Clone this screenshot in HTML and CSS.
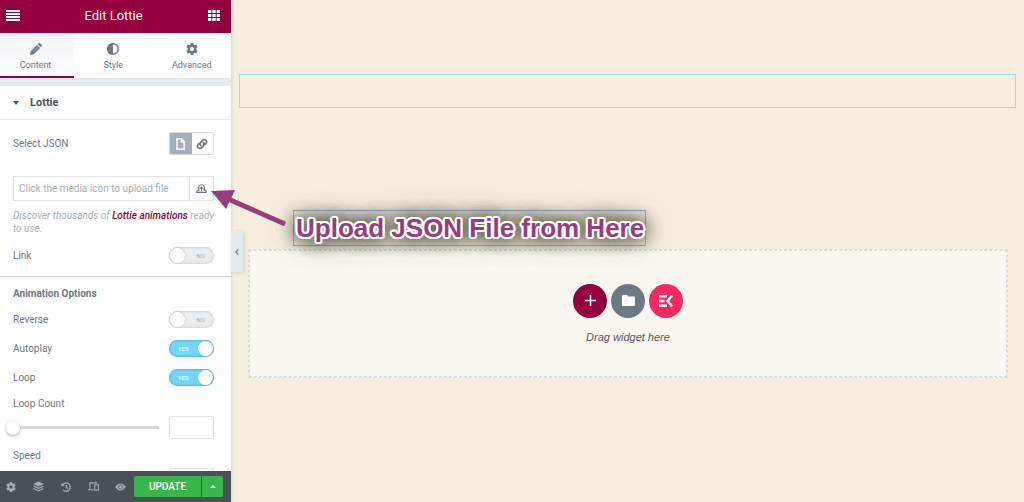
FILE: index.html
```html
<!DOCTYPE html>
<html lang="en">
<head>
    <meta charset="UTF-8">
    <meta name="viewport" content="width=device-width, initial-scale=1.0">
    <title>Edit Lottie</title>
    <link rel="stylesheet" href="styles.css">
</head>
<body>
    <aside class="panel">
        <header class="panel-header">
            <button class="header-btn" aria-label="Menu">
                <svg width="14" height="11" viewBox="0 0 14 11" fill="currentColor"><path d="M0 0h14v2H0zM0 3h14v2H0zM0 6h14v2H0zM0 9h14v2H0z"/></svg>
            </button>
            <h1>Edit Lottie</h1>
            <button class="header-btn" aria-label="Widgets">
                <svg width="12" height="11" viewBox="0 0 12 11" fill="currentColor"><path d="M0 0h3.300v3H0zM4.300 0h3.400v3H4.300zM8.700 0H12v3H8.700zM0 4h3.300v3H0zM4.300 4h3.400v3H4.300zM8.700 4H12v3H8.700zM0 8h3.300v3H0zM4.300 8h3.400v3H4.300zM8.700 8H12v3H8.700z"/></svg>
            </button>
        </header>

        <nav class="tabs">
            <button class="tab active">
                <svg width="12" height="12" viewBox="0 0 12 12"><path fill="currentColor" d="M0 12l.7-3.800L7 1.900l3.100 3.100-6.300 6.300zM7.700 1.200L8.600.3q.8-.6 1.500 0l1.600 1.600q.6.700 0 1.500l-.9.900z"/><path d="M3.200 8.600l4.300-4.300" stroke="#eef0f2" stroke-width=".6"/></svg>
                Content
            </button>
            <button class="tab">
                <svg width="12" height="12" viewBox="0 0 12 12"><circle cx="6" cy="6" r="5.200" fill="none" stroke="currentColor" stroke-width="1.500"/><path d="M6 0a6 6 0 0 0 0 12z" fill="currentColor"/></svg>
                Style
            </button>
            <button class="tab">
                <svg width="12" height="12" viewBox="0 0 12 12"><use href="#gear"/></svg>
                Advanced
            </button>
        </nav>

        <main class="controls">
            <button class="section-title">
                <svg width="6" height="4" viewBox="0 0 6 4" fill="currentColor"><path d="M0 0h6L3 4z"/></svg>
                Lottie
            </button>

            <div class="section">
                <div class="row source-row">
                    <span>Select JSON</span>
                    <div class="choices">
                        <button class="choice selected" aria-label="Media file">
                            <svg width="9" height="12" viewBox="0 0 9 12" fill="none" stroke="currentColor" stroke-width="1.400"><path d="M1 .8h4.500L8.200 3.500v7.700H1zM5.300.8v3h2.900"/></svg>
                        </button>
                        <button class="choice" aria-label="External URL">
                            <svg width="12" height="12" viewBox="0 0 12 12" fill="none" stroke="currentColor" stroke-width="1.700" stroke-linecap="round"><path d="M4.800 7.400a2.300 2.300 0 0 1 0-3.200L7 2a2.300 2.300 0 0 1 3.200 3.200L9 6.400M7.200 4.600a2.300 2.300 0 0 1 0 3.200L5 10a2.300 2.300 0 0 1-3.200-3.200L3 5.600"/></svg>
                        </button>
                    </div>
                </div>

                <div class="upload">
                    <input type="text" class="upload-input" aria-label="JSON file" placeholder="Click the media icon to upload file">
                    <button class="upload-btn" aria-label="Upload file">
                        <svg width="11" height="9" viewBox="0 0 12 10" fill="none" stroke="currentColor" stroke-width="1.200"><path d="M4 6.800H2.400Q.6 8 .6 9.300h10.800Q11.400 7 9.600 6.800H8M2.600 6.800Q2.400.8 6 .8T9.400 6.800M6 8V3.500M4 5.500L6 3.400l2 2.100"/></svg>
                    </button>
                </div>

                <p class="note">Discover thousands of <a href="#">Lottie animations</a> ready to use.</p>

                <label class="row">
                    Link
                    <span class="switch"><input type="checkbox"><span class="state">NO</span></span>
                </label>
            </div>

            <div class="section options">
                <h2>Animation Options</h2>
                <label class="row">
                    Reverse
                    <span class="switch"><input type="checkbox"><span class="state">NO</span></span>
                </label>
                <label class="row">
                    Autoplay
                    <span class="switch"><input type="checkbox" checked><span class="state">YES</span></span>
                </label>
                <label class="row">
                    Loop
                    <span class="switch"><input type="checkbox" checked><span class="state">YES</span></span>
                </label>

                <label class="slider-label" for="loop-count">Loop Count</label>
                <div class="slider-row">
                    <input type="range" class="slider" aria-label="Loop Count" min="0" max="100" value="0">
                    <input type="text" class="slider-value" id="loop-count">
                </div>

                <label class="slider-label" for="speed">Speed</label>
                <div class="slider-row">
                    <input type="range" class="slider" aria-label="Speed" min="0" max="5" value="1">
                    <input type="text" class="slider-value" id="speed">
                </div>
            </div>
        </main>

        <footer class="panel-footer">
            <div class="tools">
                <button aria-label="Settings">
                    <svg width="10" height="10" viewBox="0 0 12 12"><path id="gear" fill="currentColor" fill-rule="evenodd" d="M4.700 0h2.600l.4 1.700.9.500 1.700-.6 1.300 2.300-1.200 1.200v1.800l1.200 1.200-1.300 2.300-1.700-.6-.9.500L7.300 12H4.700l-.4-1.700-.9-.5-1.700.6L.4 8.100l1.200-1.200V5.100L.4 3.900l1.300-2.300 1.700.6.900-.5zM6 4a2 2 0 1 0 0 4 2 2 0 0 0 0-4z"/></svg>
                </button>
                <button aria-label="Navigator">
                    <svg width="11" height="11" viewBox="0 0 12 12" fill="currentColor"><path d="M6 .5L12 3.300 6 6 0 3.300zM1.400 5.200L6 7.300l4.600-2.100L12 6 6 8.800 0 6zM1.400 7.900L6 10l4.600-2.100 1.400.8-6 2.800-6-2.800z"/></svg>
                </button>
                <button aria-label="History">
                    <svg width="10" height="10" viewBox="0 0 12 12" fill="none" stroke="currentColor" stroke-width="1.500"><path d="M1.800 3.500A5 5 0 1 1 2.300 9.500M6.300 3.500v3l2 1.300"/><path d="M.4.800v4h4z" fill="currentColor" stroke="none"/></svg>
                </button>
                <button aria-label="Responsive mode">
                    <svg width="11" height="9" viewBox="0 0 12 10" fill="none" stroke="currentColor" stroke-width="1.200"><path d="M2 7.500V1h8M0 8.600h6M7.400 3h4v6h-4z"/></svg>
                </button>
                <button aria-label="Preview changes">
                    <svg width="11" height="8" viewBox="0 0 12 8"><path d="M0 4q6-7.500 12 0-6 7.500-12 0z" fill="currentColor"/><circle cx="6" cy="4" r="2.200" fill="none" stroke="#495157" stroke-width=".9"/></svg>
                </button>
            </div>
            <div class="publish">
                <button class="update">UPDATE</button>
                <button class="update-more" aria-label="Save options">
                    <svg width="6" height="3" viewBox="0 0 6 3" fill="currentColor"><path d="M0 3h6L3 0z"/></svg>
                </button>
            </div>
        </footer>
    </aside>

    <section class="preview">
        <div class="widget-outline"></div>

        <div class="drop-area">
            <div class="add-buttons">
                <button class="add-section" aria-label="Add section">
                    <svg width="11" height="11" viewBox="0 0 11 11" stroke="currentColor" stroke-width="1.500"><path d="M5.500 0v11M0 5.500h11"/></svg>
                </button>
                <button class="add-template" aria-label="Add template">
                    <svg width="13" height="11" viewBox="0 0 13 11" fill="currentColor"><path d="M1 0h4l1.500 1.500H12q1 0 1 1V10q0 1-1 1H1q-1 0-1-1V1q0-1 1-1z"/></svg>
                </button>
                <button class="add-kit" aria-label="ElementsKit">
                    <svg width="14" height="12" viewBox="0 0 14 12" fill="none" stroke="currentColor" stroke-width="2.400"><path d="M0 1.200h8M0 6h5.500M0 10.800h8M13.100.6L8.600 6l4.500 5.400"/></svg>
                </button>
            </div>
            <p>Drag widget here</p>
        </div>

        <button class="collapse" aria-label="Hide panel">
            <svg width="4" height="6" viewBox="0 0 4 6" fill="none" stroke="currentColor" stroke-width="1.200"><path d="M3.400.4L.8 3l2.600 2.600"/></svg>
        </button>

        <div class="callout">Upload JSON File from Here</div>
        <svg class="arrow" width="76" height="40" viewBox="0 0 76 40"><path d="M16 9.500L74 35" stroke="#963e7b" stroke-width="5"/><path d="M0 2l24-1-9 19z" fill="#963e7b"/></svg>
    </section>
</body>
</html>
```

FILE: styles.css
```css
* {
    box-sizing: border-box;
    margin: 0;
    padding: 0;
}

body {
    display: flex;
    height: 100vh;
    overflow: hidden;
    font-family: Roboto, Arial, sans-serif;
    font-size: 10px;
    line-height: 13px;
    color: #6d7882;
    background-color: #f5eedf;
}

button,
input {
    font: inherit;
    color: inherit;
    border: none;
    background: none;
}

button {
    display: flex;
    align-items: center;
    justify-content: center;
    cursor: pointer;
}

/* Side panel */
.panel {
    display: flex;
    flex-direction: column;
    flex: 0 0 231px;
    background-color: #fff;
    box-shadow: 0 0 4px rgba(0, 0, 0, 0.15);
}

.panel-header {
    display: flex;
    flex: 0 0 33px;
    align-items: center;
    justify-content: space-between;
    padding: 0 4px 2px 0;
    color: #fff;
    background-color: #93003c;
}

.panel-header h1 {
    font-size: 13px;
    font-weight: 400;
}

.header-btn {
    width: 26px;
    height: 30px;
}

.tabs {
    display: grid;
    grid-template-columns: 74px 1fr 1fr;
    flex: 0 0 45px;
}

.tab {
    flex-direction: column;
    gap: 4px;
    font-size: 9px;
    padding: 5px 0 0;
    border-bottom: 2px solid transparent;
}

.tab.active {
    padding-right: 3px;
    background: linear-gradient(#f1f3f5, #fff);
    border-bottom-color: #93003c;
}

.controls {
    flex: 1;
    min-height: 0;
    overflow: hidden;
    border-top: 8px solid #e6e9ec;
}

.section-title {
    gap: 11px;
    justify-content: flex-start;
    width: 100%;
    height: 34px;
    padding-left: 13px;
    font-size: 11px;
    font-weight: 700;
    color: #495157;
    border-bottom: 1px solid #e6e9ec;
}

.section {
    padding: 0 17px 9px 13px;
}

.row {
    display: flex;
    align-items: center;
    justify-content: space-between;
    min-height: 24px;
}

.source-row {
    padding-top: 12px;
}

.choices {
    display: flex;
    width: 45px;
    height: 23px;
    border: 1px solid #d5dadf;
    border-radius: 2px;
}

.choice {
    flex: 1;
}

.choice.selected {
    color: #fff;
    background-color: #a4afb7;
}

.upload {
    display: flex;
    height: 25px;
    margin: 21px 0 8px;
    border: 1px solid #e0e3e6;
}

.upload-input {
    flex: 1;
    min-width: 0;
    padding: 0 5px;
}

.upload-input::placeholder {
    color: #a4afb7;
    opacity: 1;
}

.upload-btn {
    width: 24px;
    border-left: 1px solid #e0e3e6;
}

.note {
    margin-bottom: 8px;
    font-style: italic;
    color: #a4afb7;
}

.note a {
    font-weight: 500;
    color: #93003c;
    text-decoration: none;
}

.switch {
    position: relative;
    width: 45px;
    height: 17px;
}

.switch input {
    display: block;
    width: 100%;
    height: 100%;
    appearance: none;
    border-radius: 9px;
    background-color: #ebedee;
    box-shadow: inset 0 0 2px 1px #d0d4d8;
}

/* Round knob of the switch */
.switch input::before {
    content: "";
    display: block;
    width: 15px;
    height: 15px;
    margin: 1px;
    border-radius: 50%;
    background-color: #fff;
    box-shadow: 0 0 2px rgba(0, 0, 0, 0.2);
}

.switch input:checked {
    background-color: #71d7f7;
    box-shadow: inset 0 0 2px 1px #5bb9d8;
}

.switch input:checked::before {
    margin-left: 29px;
}

.state {
    position: absolute;
    top: 2px;
    right: 9px;
    font-size: 6px;
    color: #a4afb7;
}

input:checked + .state {
    right: auto;
    left: 9px;
    color: #fff;
}

.options {
    padding-top: 10px;
    border-top: 1px solid #d5dadf;
}

.options h2 {
    margin-bottom: 7px;
    font-size: 10px;
    font-weight: 700;
}

.options .row {
    margin-bottom: 5px;
}

.slider-label {
    display: block;
    margin-top: 8px;
}

.slider-row {
    display: flex;
    gap: 10px;
    align-items: center;
    margin: 6px 0 10px -7px;
}

.slider {
    flex: 1;
    min-width: 0;
    height: 15px;
    appearance: none;
    background: linear-gradient(#d5dadf, #d5dadf) right center / calc(100% - 7px) 3px no-repeat;
}

.slider::-webkit-slider-thumb {
    appearance: none;
    width: 14px;
    height: 14px;
    border-radius: 50%;
    background-color: #fff;
    box-shadow: 0 1px 3px rgba(0, 0, 0, 0.35);
}

.slider-value {
    width: 45px;
    height: 23px;
    padding: 0 5px;
    border: 1px solid #e0e3e6;
    border-radius: 2px;
}

.panel-footer {
    display: flex;
    flex: 0 0 31px;
    align-items: center;
    padding-right: 8px;
    color: #a4afb7;
    background-color: #495157;
}

.tools {
    display: flex;
    flex: 1;
    justify-content: space-between;
    padding: 0 8px 0 5px;
}

.tools button {
    width: 11px;
    height: 20px;
}

.publish {
    display: flex;
    gap: 1px;
    height: 21px;
    color: #fff;
}

.publish button {
    background-color: #39b54a;
}

.update {
    width: 67px;
    font-weight: 500;
    border-radius: 2px 0 0 2px;
}

.publish .update-more {
    width: 21px;
    border-radius: 0 2px 2px 0;
}

/* Page preview */
.preview {
    position: relative;
    flex: 1;
    padding: 74px 8px 0;
}

.widget-outline {
    height: 34px;
    border: 1px solid #93dff0;
}

.drop-area {
    display: flex;
    flex-direction: column;
    align-items: center;
    justify-content: center;
    gap: 13px;
    height: 129px;
    margin: 141px 8px 0 9px;
    border: 1px dashed #d5dadf;
    outline: 1px dashed #d5dadf;
    outline-offset: -2px;
    background-color: #faf7f0;
}

.drop-area p {
    font-family: "Liberation Sans", Arial, sans-serif;
    font-size: 11px;
    font-style: italic;
    color: #54595f;
}

.add-buttons {
    display: flex;
    gap: 4px;
}

.add-buttons button {
    width: 34px;
    height: 34px;
    border-radius: 50%;
    color: #fff;
    background-color: #93003c;
}

.add-buttons .add-template {
    background-color: #6d7882;
}

.add-buttons .add-kit {
    background-color: #f6285f;
}

.collapse {
    position: absolute;
    top: 231px;
    left: 0;
    width: 12px;
    height: 41px;
    background-color: #e6e9ec;
    box-shadow: 1px 1px 4px rgba(0, 0, 0, 0.15);
}

.callout {
    position: absolute;
    top: 210px;
    left: 62px;
    padding: 0 1px 0 2px;
    border: 1px solid #93add8;
    font-family: "Liberation Sans", Arial, sans-serif;
    font-size: 26px;
    font-weight: 700;
    line-height: 34px;
    white-space: nowrap;
    color: #963e7b;
    text-shadow:
        2px 0 #fff, -2px 0 #fff, 0 2px #fff, 0 -2px #fff,
        2px 1px #fff, -2px 1px #fff, 2px -1px #fff, -2px -1px #fff,
        1px 2px #fff, -1px 2px #fff, 1px -2px #fff, -1px -2px #fff,
        0 0 18px #444439, 0 0 18px #444439, 0 0 18px #444439, 0 0 30px #444439;
}

.arrow {
    position: absolute;
    top: 189px;
    left: -20px;
}
```
